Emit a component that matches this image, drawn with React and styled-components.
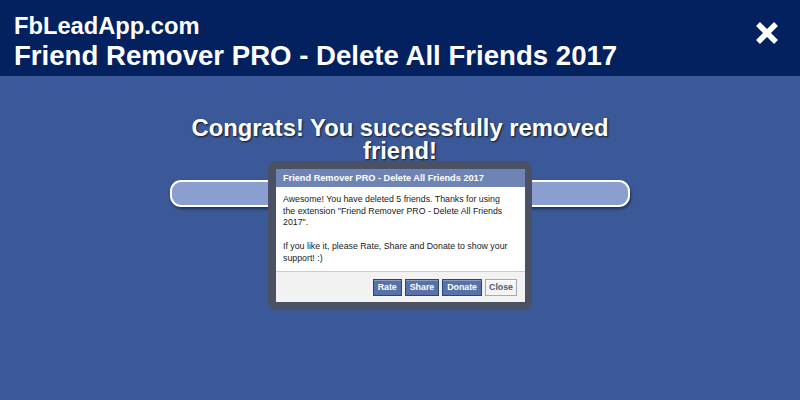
import React from "react";
import styled, { createGlobalStyle } from "styled-components";

const Global = createGlobalStyle`
  html, body { margin: 0; padding: 0; background: #3b5998; }
  body { font-family: "Liberation Sans", Arial, sans-serif; }
  #root { min-height: 400px; }
`;

const Page = styled.div`
  position: relative;
  width: 800px;
  height: 400px;
  overflow: hidden;
  background: #3b5998;
  display: flex;
  flex-direction: column;
`;

const Header = styled.header`
  height: 76px;
  box-sizing: border-box;
  background: #04215f;
  padding: 13px 20px 0 14px;
  display: flex;
  justify-content: space-between;
  align-items: flex-start;
  color: #fff;
`;

const Titles = styled.div`
  display: flex;
  flex-direction: column;
`;

const Site = styled.div`
  font-weight: bold;
  font-size: 23.7px;
  line-height: 27px;
`;

const AppName = styled.div`
  font-weight: bold;
  font-size: 27.6px;
  line-height: 32px;
`;

const CloseX = styled.button`
  margin-top: 8px;
  width: 26px;
  height: 24px;
  padding: 0;
  border: 0;
  background: none;
  cursor: pointer;
  display: flex;
`;

const Main = styled.main`
  display: flex;
  flex-direction: column;
  align-items: center;
  padding-top: 40px;
`;

const Title = styled.h1`
  margin: 0;
  width: 460px;
  text-align: center;
  color: #fff;
  font-weight: bold;
  font-size: 23.8px;
  line-height: 23px;
  text-shadow: 1px 1px 2px rgba(0, 0, 0, 0.75);
`;

const Bar = styled.div`
  margin-top: 18px;
  width: 460px;
  height: 27px;
  box-sizing: border-box;
  border: 2px solid #fff;
  border-radius: 11px;
  background: #8a9ecf;
  box-shadow: 1px 2px 3px rgba(0, 0, 0, 0.45);
`;

const Frame = styled.div`
  position: absolute;
  top: 161px;
  left: 50%;
  transform: translateX(-50%);
  width: 264px;
  box-sizing: border-box;
  padding: 8px 7px 8px 8px;
  border-radius: 8px;
  background: #4b5165;
`;

const Dialog = styled.div`
  background: #fff;
  font-family: "Liberation Sans", Arial, sans-serif;
`;

const DialogHead = styled.div`
  height: 18px;
  box-sizing: border-box;
  background: #6d84b4;
  color: #fff;
  font-weight: bold;
  font-size: 9.2px;
  line-height: 18px;
  padding-left: 7px;
  white-space: nowrap;
`;

const DialogBody = styled.div`
  padding: 7px 12px 7px 7px;
  font-size: 8.8px;
  line-height: 11.7px;
  color: #1a1a1a;
`;

const DialogFoot = styled.div`
  border-top: 1px solid #cccccc;
  background: #f2f2f2;
  height: 31px;
  box-sizing: border-box;
  padding: 0 8px 0;
  display: flex;
  justify-content: flex-end;
  align-items: center;
  gap: 3px;
`;

const Btn = styled.button`
  height: 17px;
  box-sizing: border-box;
  padding: 0 ${(p) => (p.$secondary ? "3px" : "4px")};
  font-family: "Liberation Sans", Arial, sans-serif;
  font-weight: bold;
  font-size: 8.8px;
  line-height: 15px;
  cursor: pointer;
  border: 1px solid ${(p) => (p.$secondary ? "#a5a9b2" : "#29447e")};
  background: ${(p) => (p.$secondary ? "#f4f4f4" : "#5872a7")};
  color: ${(p) => (p.$secondary ? "#4e5b75" : "#fff")};
  box-shadow: inset 0 1px 0 ${(p) => (p.$secondary ? "#fff" : "#8a9cc2")};
`;

export default function App() {
  return (
    <Page>
      <Global />
      <Header>
        <Titles>
          <Site>FbLeadApp.com</Site>
          <AppName>Friend Remover PRO - Delete All Friends 2017</AppName>
        </Titles>
        <CloseX aria-label="Close">
          <svg width="26" height="24" viewBox="0 0 26 24">
            <path d="M4 3 L22 21 M22 3 L4 21" stroke="#fff" strokeWidth="5.5" strokeLinecap="butt" />
          </svg>
        </CloseX>
      </Header>
      <Main>
        <Title>Congrats! You successfully removed friend!</Title>
        <Bar />
      </Main>
      <Frame>
        <Dialog>
          <DialogHead>Friend Remover PRO - Delete All Friends 2017</DialogHead>
          <DialogBody>
            Awesome! You have deleted 5 friends. Thanks for using the extension "Friend Remover PRO - Delete All Friends 2017".
            <br />
            <br />
            If you like it, please Rate, Share and Donate to show your support! :)
          </DialogBody>
          <DialogFoot>
            <Btn>Rate</Btn>
            <Btn>Share</Btn>
            <Btn>Donate</Btn>
            <Btn $secondary>Close</Btn>
          </DialogFoot>
        </Dialog>
      </Frame>
    </Page>
  );
}
